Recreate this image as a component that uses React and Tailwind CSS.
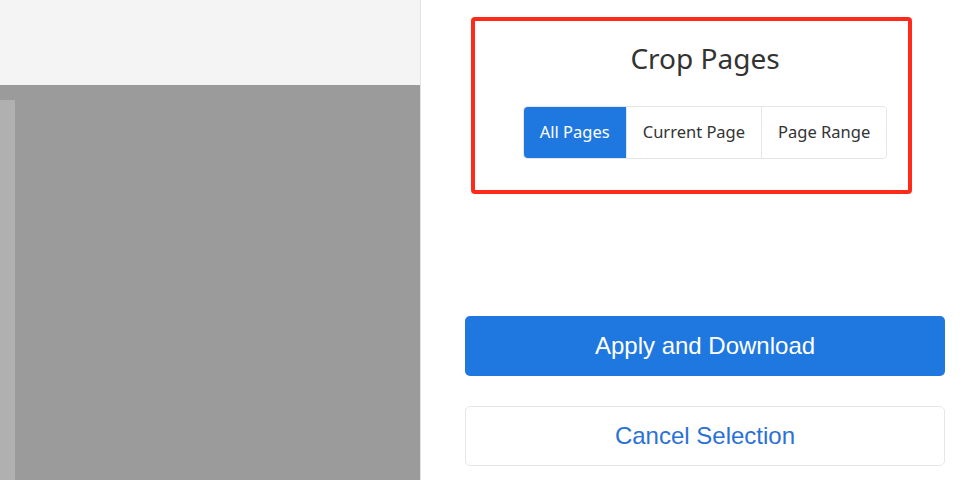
import React, { useState } from 'react';

const modes = ['All Pages', 'Current Page', 'Page Range'];

const App = () => {
  const [mode, setMode] = useState('All Pages');

  return (
    <div className="relative flex h-[480px] w-[961px] overflow-hidden bg-white">
      {/* preview side */}
      <div className="flex w-[421px] flex-col border-r border-[#e3e3e3]">
        <div className="h-[85px] bg-[#f4f4f4]"></div>
        <div className="flex-1 bg-[#9b9b9b] pt-[15px]">
          <div className="h-full w-[15px] bg-[#b0b0b0]"></div>
        </div>
      </div>

      {/* options side */}
      <div className="flex flex-1 flex-col pl-[44px] pr-[16px] font-['Noto_Sans',sans-serif]">
        <h2 className="mt-[39px] text-center text-[28px] leading-[38px] font-normal text-[#333]">Crop Pages</h2>

        <div className="mt-[29px] flex justify-center">
          <div className="flex h-[53px] rounded-[4px] border border-[#e6e6e6]">
            {modes.map((m, i) => (
              <button
                key={m}
                onClick={() => setMode(m)}
                className={
                  'px-[16px] text-[16.5px] leading-none ' +
                  (i > 0 ? 'border-l border-[#e6e6e6] ' : '') +
                  (i === 0 ? 'rounded-l-[4px] ' : '') +
                  (i === modes.length - 1 ? 'rounded-r-[4px] ' : '') +
                  (mode === m ? 'bg-[#1f77e0] text-white' : 'bg-white text-[#333]')
                }
              >
                {m}
              </button>
            ))}
          </div>
        </div>

        <button className="mt-[157px] h-[60px] w-full rounded-[5px] bg-[#1f77e0] font-['Liberation_Sans',Arial,sans-serif] text-[24px] text-white">
          Apply and Download
        </button>
        <button className="mt-[30px] h-[60px] w-full rounded-[5px] border border-[#e6e6e6] bg-white font-['Liberation_Sans',Arial,sans-serif] text-[24px] text-[#2a71d6]">
          Cancel Selection
        </button>
      </div>

      {/* annotation box */}
      <div className="pointer-events-none absolute top-[17px] left-[471px] h-[177px] w-[441px] rounded-[4px] border-4 border-[#ff2a1a]"></div>
    </div>
  );
};

export default App;
